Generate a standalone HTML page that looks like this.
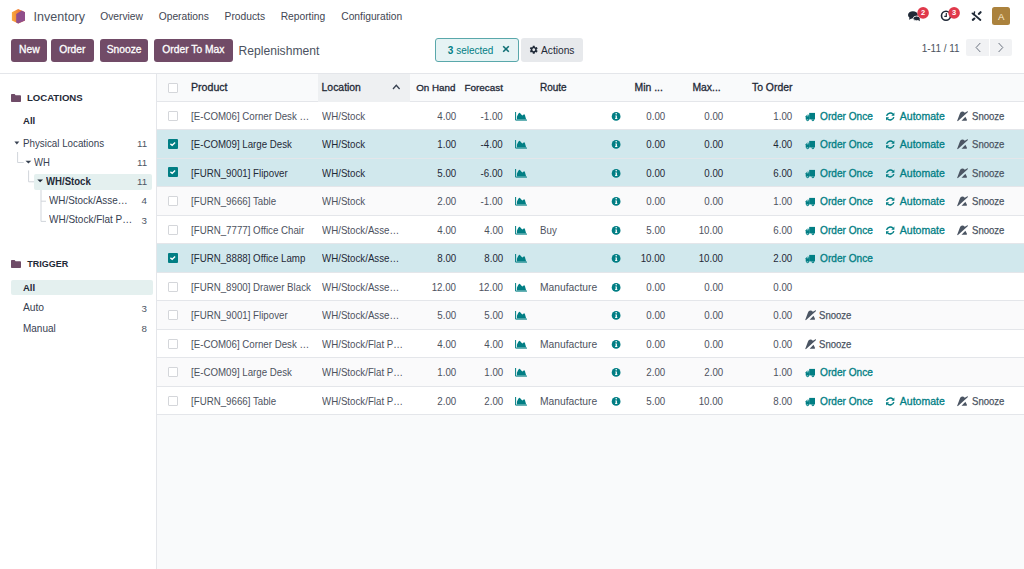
<!DOCTYPE html>
<html><head><meta charset="utf-8">
<style>
*{box-sizing:border-box;margin:0;padding:0}
html,body{width:1024px;height:569px;overflow:hidden;background:#fff;font-family:"Liberation Sans",sans-serif;color:#374151}
.a{position:absolute;white-space:nowrap}
.nav{font-size:10.25px;color:#3f4652}
.btn{position:absolute;top:38.5px;height:23.5px;background:#714b67;border-radius:3px;color:#fff;-webkit-text-stroke:0.3px #fff;font-size:10.3px;line-height:22.5px;text-align:center}
#side{position:absolute;left:0;top:74px;width:157px;height:495px;background:#fff;border-right:1px solid #e4e6ea}
#list{position:absolute;left:157px;top:74px;width:867px;height:495px;background:#f9fafb}
.row{position:absolute;left:0;width:867px;height:28.5px;border-bottom:1px solid #e4e6ea;background:#fff}
.row.sel{background:#d1e8ed}
.row.odd{background:#fafafb}
.cb{position:absolute;left:11px;top:9px;width:10px;height:10px;border:1px solid #d4d6da;background:#fff;border-radius:1px}
.cbk{position:absolute;left:11px;top:8.9px;width:10px;height:10px;background:#017e84;border-radius:1px}
.t{position:absolute;top:1.2px;line-height:28.5px;font-size:10.4px;transform:scaleX(0.935);transform-origin:0 50%;color:#4d525e;white-space:nowrap}
.sel .t{color:#1f2937}
.r{text-align:right;transform-origin:100% 50%}
.hd{position:absolute;top:0;line-height:27px;font-size:10.2px;-webkit-text-stroke:0.3px #1f2937;color:#1f2937;white-space:nowrap}
.link{color:#017e84 !important;-webkit-text-stroke:0.3px #017e84;transform:none !important}
.sn{color:#4b5563 !important;-webkit-text-stroke:0.25px #4b5563;transform:none !important}
.side-t{position:absolute;font-size:9.8px;color:#374151;white-space:nowrap}
.cnt{position:absolute;right:9.3px;font-size:9.75px;color:#4b5563;text-align:right}
</style></head><body>

<!-- NAVBAR -->
<svg class="a" style="left:11px;top:8px" width="16" height="17" viewBox="11 8 16 17">
  <defs><linearGradient id="og" x1="0" y1="0" x2="1" y2="0"><stop offset="0" stop-color="#f9aa3e"/><stop offset="1" stop-color="#e9592a"/></linearGradient></defs>
  <polygon points="18.2,8.9 25,12.2 25,20.5 18.2,23.6 11.9,20.5 11.9,12.2" fill="url(#og)"/>
  <polygon points="16.2,14 21.8,10.6 25,12.2 25,20.5 18.2,23.6 16.2,22.6" fill="#904e8b"/>
</svg>
<div class="a" style="left:33.6px;top:7.2px;font-size:12.5px;line-height:20px;color:#4b5260">Inventory</div>
<div class="a nav" style="left:100.2px;top:9.2px;line-height:16px">Overview</div>
<div class="a nav" style="left:158.75px;top:9.2px;line-height:16px">Operations</div>
<div class="a nav" style="left:224.6px;top:9.2px;line-height:16px">Products</div>
<div class="a nav" style="left:280.7px;top:9.2px;line-height:16px">Reporting</div>
<div class="a nav" style="left:341.25px;top:9.2px;line-height:16px">Configuration</div>

<!-- right icons -->
<svg class="a" style="left:900px;top:0px" width="124" height="32" viewBox="900 0 124 32">
  <ellipse cx="912.9" cy="14.9" rx="4.9" ry="3.7" fill="#1f2937"/>
  <path d="M909.6 16.5 L909.1 19.7 L912.2 18.2 Z" fill="#1f2937"/>
  <ellipse cx="916.6" cy="18.4" rx="3.5" ry="2.3" fill="#1f2937" stroke="#fff" stroke-width="0.8"/>
  <path d="M917.6 19.4 L920 21.2 L919.5 18.6 Z" fill="#1f2937"/>
  <circle cx="923.1" cy="12.9" r="5.8" fill="#e0394b"/>
  <circle cx="946" cy="15.7" r="4.5" fill="none" stroke="#1f2937" stroke-width="1.6"/>
  <path d="M946.3 12.9 V16.4 H944.3" fill="none" stroke="#1f2937" stroke-width="1.2"/>
  <circle cx="954.1" cy="12.9" r="5.8" fill="#e0394b"/>
  <path d="M974.2 14.6 L980.4 20" stroke="#1f2937" stroke-width="1.8" stroke-linecap="round"/>
  <path d="M972.3 13.3 L973.9 14.6 L974.5 12" stroke="#1f2937" stroke-width="1.5" fill="none" stroke-linecap="round"/>
  <path d="M980.6 12.2 L978.8 13.9" stroke="#1f2937" stroke-width="2.1" stroke-linecap="round"/>
  <path d="M974.4 18.5 L972.8 19.9" stroke="#1f2937" stroke-width="2.1" stroke-linecap="round"/>
</svg>
<div class="a" style="left:917.3px;top:7.1px;width:11.6px;height:11.6px;color:#fff;font-size:7.5px;font-weight:bold;text-align:center;line-height:11.6px">2</div>
<div class="a" style="left:948.3px;top:7.1px;width:11.6px;height:11.6px;color:#fff;font-size:7.5px;font-weight:bold;text-align:center;line-height:11.6px">3</div>
<div class="a" style="left:992px;top:7.2px;width:18.4px;height:18.3px;border-radius:2.5px;background:#ab823d;color:#fcefd2;font-size:9.6px;text-align:center;line-height:19.6px">A</div>

<!-- CONTROL PANEL -->
<div class="btn" style="left:11.3px;width:36px">New</div>
<div class="btn" style="left:50.8px;width:43px">Order</div>
<div class="btn" style="left:99.8px;width:48.6px">Snooze</div>
<div class="btn" style="left:154.2px;width:78.4px">Order To Max</div>
<div class="a" style="left:238.6px;top:40.9px;font-size:12.1px;line-height:20px;color:#4b5260">Replenishment</div>

<div class="a" style="left:435.2px;top:38.4px;width:83.5px;height:23.4px;border:1px solid #5aa8ab;border-radius:3px;background:#e6f3f4"></div>
<div class="a" style="left:447.8px;top:42px;font-size:10px;line-height:17px;color:#017e84"><b>3</b> selected</div>
<svg class="a" style="left:502px;top:45px" width="8" height="8" viewBox="0 0 8 8"><path d="M1.2 1.2 L6.8 6.8 M6.8 1.2 L1.2 6.8" stroke="#0e6f74" stroke-width="1.6"/></svg>
<div class="a" style="left:521.2px;top:38.4px;width:61.6px;height:23.4px;border-radius:3px;background:#e7e9ec"></div>
<svg class="a" style="left:528.5px;top:45.2px" width="9.5" height="9.5" viewBox="0 0 24 24"><path fill="#1f2937" d="M19.4 13c.04-.33.06-.66.06-1s-.02-.67-.06-1l2.1-1.65c.2-.15.25-.42.12-.64l-2-3.46c-.12-.22-.39-.3-.61-.22l-2.49 1c-.52-.4-1.08-.73-1.69-.98l-.38-2.65C14.46 2.18 14.25 2 14 2h-4c-.25 0-.46.18-.49.42l-.38 2.65c-.61.25-1.17.59-1.69.98l-2.49-1c-.23-.09-.49 0-.61.22l-2 3.46c-.13.22-.07.49.12.64L4.57 11c-.04.33-.07.67-.07 1s.03.67.07 1l-2.11 1.65c-.19.15-.24.42-.12.64l2 3.46c.12.22.39.3.61.22l2.49-1c.52.4 1.08.73 1.69.98l.38 2.65c.03.24.24.42.49.42h4c.25 0 .46-.18.49-.42l.38-2.65c.61-.25 1.17-.59 1.69-.98l2.49 1c.23.09.49 0 .61-.22l2-3.46c.12-.22.07-.49-.12-.64L19.4 13zM12 15.5c-1.93 0-3.5-1.57-3.5-3.5s1.57-3.5 3.5-3.5 3.5 1.57 3.5 3.5-1.57 3.5-3.5 3.5z"/></svg>
<div class="a" style="left:541px;top:42px;font-size:10.2px;line-height:17px;color:#1f2937">Actions</div>

<div class="a" style="left:921.7px;top:39.6px;font-size:10px;line-height:17px;color:#4b5260">1-11 / 11</div>
<div class="a" style="left:966.2px;top:38.5px;width:45.7px;height:17.8px;background:#f1f2f4;border-radius:2px"></div>
<div class="a" style="left:989px;top:38.5px;width:1px;height:17.8px;background:#fff"></div>
<svg class="a" style="left:966px;top:38px" width="46" height="19" viewBox="0 0 46 19">
  <path d="M14.3 5 L10.1 9.5 L14.3 14" fill="none" stroke="#6b7280" stroke-width="1"/>
  <path d="M32.6 5 L36.8 9.5 L32.6 14" fill="none" stroke="#6b7280" stroke-width="1"/>
</svg>

<div class="a" style="left:0;top:73px;width:1024px;height:1px;background:#e4e6ea"></div>

<!-- SIDEBAR -->
<div id="side"></div>
<svg class="a" style="left:11px;top:94px" width="10" height="8" viewBox="0 0 10 8"><path d="M0 0.8 Q0 0 0.8 0 H3.6 L4.6 1.2 H9.2 Q10 1.2 10 2 V7.2 Q10 8 9.2 8 H0.8 Q0 8 0 7.2 Z" fill="#6f4c68"/></svg>
<div class="a" style="left:26.9px;top:90px;font-size:9.6px;font-weight:bold;line-height:16px;color:#1f2937">LOCATIONS</div>
<div class="a" style="left:23.1px;top:113px;font-size:9.5px;font-weight:bold;line-height:16px;color:#1f2937">All</div>

<svg class="a" style="left:0;top:130px" width="156" height="100" viewBox="0 130 156 100">
  <path d="M14.4 141.4 H19.3 L16.85 144.4 Z" fill="#374151"/>
  <path d="M17.6 152 V162.5 H23.7" fill="none" stroke="#d1d5db" stroke-width="1"/>
  <path d="M25.5 160.8 H31.3 L28.4 163.6 Z" fill="#374151"/>
  <path d="M28.6 170.4 V181.8 H34.3" fill="none" stroke="#d1d5db" stroke-width="1"/>
  <path d="M41 190 V221.4 M41 201.2 H46 M41 221.4 H46" fill="none" stroke="#d1d5db" stroke-width="1"/>
</svg>
<div class="a" style="left:22.8px;top:137.6px;font-size:10.3px;transform:scaleX(0.95);transform-origin:0 50%;line-height:12px;color:#374151">Physical Locations</div>
<div class="a" style="left:34.3px;top:157.2px;font-size:10.1px;transform:scaleX(0.94);transform-origin:0 50%;line-height:12px;color:#374151">WH</div>
<div class="a" style="left:34.3px;top:173.6px;width:117.9px;height:16px;border-radius:2px;background:#e4f0ef"></div>
<svg class="a" style="left:36px;top:178px" width="8" height="6" viewBox="0 0 8 6"><path d="M1.3 1.4 H7 L4.15 4.2 Z" fill="#1f2937"/></svg>
<div class="a" style="left:46px;top:175.7px;font-size:10.1px;transform:scaleX(0.95);transform-origin:0 50%;font-weight:bold;line-height:12px;color:#1f2937">WH/Stock</div>
<div class="a" style="left:49.2px;top:194.6px;font-size:10.3px;transform:scaleX(0.96);transform-origin:0 50%;line-height:12px;color:#374151">WH/Stock/Asse…</div>
<div class="a" style="left:49.2px;top:214.1px;font-size:10.3px;transform:scaleX(0.97);transform-origin:0 50%;line-height:12px;color:#374151">WH/Stock/Flat P…</div>
<div class="a cnt" style="top:138px;line-height:12px;right:auto;left:137px">11</div>
<div class="a cnt" style="top:157.2px;line-height:12px;right:auto;left:137px">11</div>
<div class="a cnt" style="top:176px;line-height:12px;right:auto;left:137px">11</div>
<div class="a cnt" style="top:195px;line-height:12px;right:auto;left:141.5px">4</div>
<div class="a cnt" style="top:214.6px;line-height:12px;right:auto;left:141.5px">3</div>

<svg class="a" style="left:11px;top:259.8px" width="10" height="8" viewBox="0 0 10 8"><path d="M0 0.8 Q0 0 0.8 0 H3.6 L4.6 1.2 H9.2 Q10 1.2 10 2 V7.2 Q10 8 9.2 8 H0.8 Q0 8 0 7.2 Z" fill="#6f4c68"/></svg>
<div class="a" style="left:27.2px;top:256px;font-size:9px;font-weight:bold;line-height:16px;color:#1f2937">TRIGGER</div>
<div class="a" style="left:11.4px;top:280.4px;width:141.6px;height:14.6px;border-radius:2px;background:#e4f0ef"></div>
<div class="a" style="left:22.9px;top:282px;font-size:9.5px;font-weight:bold;line-height:12px;color:#1f2937">All</div>
<div class="a" style="left:22.9px;top:302px;font-size:10.3px;line-height:12px;color:#374151">Auto</div>
<div class="a" style="left:22.9px;top:322.6px;font-size:10.3px;transform:scaleX(0.97);transform-origin:0 50%;line-height:12px;color:#374151">Manual</div>
<div class="a cnt" style="top:302.5px;line-height:12px;right:auto;left:141.5px">3</div>
<div class="a cnt" style="top:323px;line-height:12px;right:auto;left:141.5px">8</div>

<!-- LIST -->
<div id="list">
  <div class="a" style="left:0;top:0;width:867px;height:27.5px;background:#f9fafb;border-bottom:1px solid #e4e6ea"></div>
  <div class="a" style="left:161px;top:0;width:91.8px;height:27.5px;background:#eef0f2"></div>
  <div class="cb" style="top:9.3px"></div>
  <div class="hd" style="left:34px;font-size:10.6px">Product</div>
  <div class="hd" style="left:164.6px;font-size:10.4px">Location</div>
  <svg class="a" style="left:235px;top:10px" width="9" height="6" viewBox="0 0 9 6"><path d="M1 5 L4.3 1.2 L7.6 5" fill="none" stroke="#374151" stroke-width="1.3"/></svg>
  <div class="hd" style="left:259.2px;font-size:9.8px">On Hand</div>
  <div class="hd" style="left:307.5px;font-size:9.9px">Forecast</div>
  <div class="hd" style="left:383px;font-size:10.0px">Route</div>
  <div class="hd" style="left:477.5px;font-size:10.4px">Min ...</div>
  <div class="hd" style="left:535.4px;font-size:10.4px">Max...</div>
  <div class="hd" style="left:595px;font-size:10.4px">To Order</div>
<div class="row" style="top:27.50px"><div class="cb"></div><div class="t" style="left:34px">[E-COM06] Corner Desk …</div><div class="t" style="left:164.7px">WH/Stock</div><div class="t r" style="right:567.8px">4.00</div><div class="t r" style="right:520.9px">-1.00</div><div class="t r" style="right:358.8px">0.00</div><div class="t r" style="right:300.7px">0.00</div><div class="t r" style="right:231.8px">1.00</div><div class="t link" style="left:663.1px;font-size:10.1px">Order Once</div><div class="t link" style="left:742.8px;font-size:10.5px;top:0.3px">Automate</div><div class="t sn" style="left:815px;font-size:10.4px;transform:scaleX(0.92) !important">Snooze</div><svg style="position:absolute;left:0;top:0" width="867" height="29" viewBox="0 0 867 29"><path d="M358.6 10 V18.1 H370" fill="none" stroke="#017e84" stroke-width="1"/><path d="M359.9 17.6 V14.7 C360.6 13.1 361.5 10.9 362.4 10.8 C363.2 10.8 364.4 13.1 365.3 13.4 C366 13.4 366.7 12.1 367.3 12.2 C368 12.4 368.7 16 369.3 17.6 Z" fill="#017e84"/><circle cx="459.1" cy="14.4" r="4.4" fill="#017e84"/><circle cx="459.2" cy="11.8" r="0.8" fill="#fff"/><path d="M458.3 13.5 H459.9 V16.2 H460.4 V16.9 H458 V16.2 H458.6 V14.1 H458.3 Z" fill="#fff"/><g transform="translate(648.5,0)"><path d="M3.7 10.9 H9.5 V17.4 H3.7 Z" fill="#017e84"/><path d="M0.2 14.3 L1.6 12.7 H3.9 V17.4 H0.2 Z" fill="#017e84"/><path d="M1 14.2 L1.9 13.3 H3 V14.2 Z" fill="#bfe6e9"/><circle cx="2.1" cy="17.8" r="1.35" fill="#017e84"/><circle cx="7.4" cy="17.8" r="1.35" fill="#017e84"/><circle cx="2.1" cy="17.8" r="0.55" fill="#bfe6e9"/><circle cx="7.4" cy="17.8" r="0.55" fill="#bfe6e9"/></g><path d="M729.6 13.9 A3.8 3.8 0 0 1 736 12.2" fill="none" stroke="#017e84" stroke-width="1.5"/><path d="M736.8 15.1 A3.8 3.8 0 0 1 730.4 16.8" fill="none" stroke="#017e84" stroke-width="1.5"/><path d="M734.3 13.7 H737.4 V10.6 Z" fill="#017e84"/><path d="M732.1 15.3 H729 V18.4 Z" fill="#017e84"/><g transform="translate(799.9,9.2)"><path d="M0.3 9.5 L2.9 2.6 C3.5 1.1 4.4 0.4 5.4 0.4 C6.3 0.4 7.2 0.8 7.9 1.5 L10.1 0.2 C10.8 -0.1 11.3 0.6 10.8 1.1 L1.1 9.8 C0.7 10.1 0.2 9.9 0.3 9.5 Z" fill="#4b5563"/><path d="M4.6 9.6 L8.5 5.5 L9.9 8.4 L9.9 9.6 Z" fill="#4b5563"/></g></svg></div>
<div class="row sel" style="top:56.00px"><div class="cbk"><svg width="10" height="10" viewBox="0 0 10 10" style="position:absolute;left:0;top:0"><path d="M2.4 4.9 L4.2 6.3 L7.1 3.5" fill="none" stroke="#fff" stroke-width="1.35"/></svg></div><div class="t" style="left:34px">[E-COM09] Large Desk</div><div class="t" style="left:164.7px">WH/Stock</div><div class="t r" style="right:567.8px">1.00</div><div class="t r" style="right:520.9px">-4.00</div><div class="t r" style="right:358.8px">0.00</div><div class="t r" style="right:300.7px">0.00</div><div class="t r" style="right:231.8px">4.00</div><div class="t link" style="left:663.1px;font-size:10.1px">Order Once</div><div class="t link" style="left:742.8px;font-size:10.5px;top:0.3px">Automate</div><div class="t sn" style="left:815px;font-size:10.4px;transform:scaleX(0.92) !important">Snooze</div><svg style="position:absolute;left:0;top:0" width="867" height="29" viewBox="0 0 867 29"><path d="M358.6 10 V18.1 H370" fill="none" stroke="#017e84" stroke-width="1"/><path d="M359.9 17.6 V14.7 C360.6 13.1 361.5 10.9 362.4 10.8 C363.2 10.8 364.4 13.1 365.3 13.4 C366 13.4 366.7 12.1 367.3 12.2 C368 12.4 368.7 16 369.3 17.6 Z" fill="#017e84"/><circle cx="459.1" cy="14.4" r="4.4" fill="#017e84"/><circle cx="459.2" cy="11.8" r="0.8" fill="#fff"/><path d="M458.3 13.5 H459.9 V16.2 H460.4 V16.9 H458 V16.2 H458.6 V14.1 H458.3 Z" fill="#fff"/><g transform="translate(648.5,0)"><path d="M3.7 10.9 H9.5 V17.4 H3.7 Z" fill="#017e84"/><path d="M0.2 14.3 L1.6 12.7 H3.9 V17.4 H0.2 Z" fill="#017e84"/><path d="M1 14.2 L1.9 13.3 H3 V14.2 Z" fill="#bfe6e9"/><circle cx="2.1" cy="17.8" r="1.35" fill="#017e84"/><circle cx="7.4" cy="17.8" r="1.35" fill="#017e84"/><circle cx="2.1" cy="17.8" r="0.55" fill="#bfe6e9"/><circle cx="7.4" cy="17.8" r="0.55" fill="#bfe6e9"/></g><path d="M729.6 13.9 A3.8 3.8 0 0 1 736 12.2" fill="none" stroke="#017e84" stroke-width="1.5"/><path d="M736.8 15.1 A3.8 3.8 0 0 1 730.4 16.8" fill="none" stroke="#017e84" stroke-width="1.5"/><path d="M734.3 13.7 H737.4 V10.6 Z" fill="#017e84"/><path d="M732.1 15.3 H729 V18.4 Z" fill="#017e84"/><g transform="translate(799.9,9.2)"><path d="M0.3 9.5 L2.9 2.6 C3.5 1.1 4.4 0.4 5.4 0.4 C6.3 0.4 7.2 0.8 7.9 1.5 L10.1 0.2 C10.8 -0.1 11.3 0.6 10.8 1.1 L1.1 9.8 C0.7 10.1 0.2 9.9 0.3 9.5 Z" fill="#4b5563"/><path d="M4.6 9.6 L8.5 5.5 L9.9 8.4 L9.9 9.6 Z" fill="#4b5563"/></g></svg></div>
<div class="row sel" style="top:84.50px"><div class="cbk"><svg width="10" height="10" viewBox="0 0 10 10" style="position:absolute;left:0;top:0"><path d="M2.4 4.9 L4.2 6.3 L7.1 3.5" fill="none" stroke="#fff" stroke-width="1.35"/></svg></div><div class="t" style="left:34px">[FURN_9001] Flipover</div><div class="t" style="left:164.7px">WH/Stock</div><div class="t r" style="right:567.8px">5.00</div><div class="t r" style="right:520.9px">-6.00</div><div class="t r" style="right:358.8px">0.00</div><div class="t r" style="right:300.7px">0.00</div><div class="t r" style="right:231.8px">6.00</div><div class="t link" style="left:663.1px;font-size:10.1px">Order Once</div><div class="t link" style="left:742.8px;font-size:10.5px;top:0.3px">Automate</div><div class="t sn" style="left:815px;font-size:10.4px;transform:scaleX(0.92) !important">Snooze</div><svg style="position:absolute;left:0;top:0" width="867" height="29" viewBox="0 0 867 29"><path d="M358.6 10 V18.1 H370" fill="none" stroke="#017e84" stroke-width="1"/><path d="M359.9 17.6 V14.7 C360.6 13.1 361.5 10.9 362.4 10.8 C363.2 10.8 364.4 13.1 365.3 13.4 C366 13.4 366.7 12.1 367.3 12.2 C368 12.4 368.7 16 369.3 17.6 Z" fill="#017e84"/><circle cx="459.1" cy="14.4" r="4.4" fill="#017e84"/><circle cx="459.2" cy="11.8" r="0.8" fill="#fff"/><path d="M458.3 13.5 H459.9 V16.2 H460.4 V16.9 H458 V16.2 H458.6 V14.1 H458.3 Z" fill="#fff"/><g transform="translate(648.5,0)"><path d="M3.7 10.9 H9.5 V17.4 H3.7 Z" fill="#017e84"/><path d="M0.2 14.3 L1.6 12.7 H3.9 V17.4 H0.2 Z" fill="#017e84"/><path d="M1 14.2 L1.9 13.3 H3 V14.2 Z" fill="#bfe6e9"/><circle cx="2.1" cy="17.8" r="1.35" fill="#017e84"/><circle cx="7.4" cy="17.8" r="1.35" fill="#017e84"/><circle cx="2.1" cy="17.8" r="0.55" fill="#bfe6e9"/><circle cx="7.4" cy="17.8" r="0.55" fill="#bfe6e9"/></g><path d="M729.6 13.9 A3.8 3.8 0 0 1 736 12.2" fill="none" stroke="#017e84" stroke-width="1.5"/><path d="M736.8 15.1 A3.8 3.8 0 0 1 730.4 16.8" fill="none" stroke="#017e84" stroke-width="1.5"/><path d="M734.3 13.7 H737.4 V10.6 Z" fill="#017e84"/><path d="M732.1 15.3 H729 V18.4 Z" fill="#017e84"/><g transform="translate(799.9,9.2)"><path d="M0.3 9.5 L2.9 2.6 C3.5 1.1 4.4 0.4 5.4 0.4 C6.3 0.4 7.2 0.8 7.9 1.5 L10.1 0.2 C10.8 -0.1 11.3 0.6 10.8 1.1 L1.1 9.8 C0.7 10.1 0.2 9.9 0.3 9.5 Z" fill="#4b5563"/><path d="M4.6 9.6 L8.5 5.5 L9.9 8.4 L9.9 9.6 Z" fill="#4b5563"/></g></svg></div>
<div class="row odd" style="top:113.00px"><div class="cb"></div><div class="t" style="left:34px">[FURN_9666] Table</div><div class="t" style="left:164.7px">WH/Stock</div><div class="t r" style="right:567.8px">2.00</div><div class="t r" style="right:520.9px">-1.00</div><div class="t r" style="right:358.8px">0.00</div><div class="t r" style="right:300.7px">0.00</div><div class="t r" style="right:231.8px">1.00</div><div class="t link" style="left:663.1px;font-size:10.1px">Order Once</div><div class="t link" style="left:742.8px;font-size:10.5px;top:0.3px">Automate</div><div class="t sn" style="left:815px;font-size:10.4px;transform:scaleX(0.92) !important">Snooze</div><svg style="position:absolute;left:0;top:0" width="867" height="29" viewBox="0 0 867 29"><path d="M358.6 10 V18.1 H370" fill="none" stroke="#017e84" stroke-width="1"/><path d="M359.9 17.6 V14.7 C360.6 13.1 361.5 10.9 362.4 10.8 C363.2 10.8 364.4 13.1 365.3 13.4 C366 13.4 366.7 12.1 367.3 12.2 C368 12.4 368.7 16 369.3 17.6 Z" fill="#017e84"/><circle cx="459.1" cy="14.4" r="4.4" fill="#017e84"/><circle cx="459.2" cy="11.8" r="0.8" fill="#fff"/><path d="M458.3 13.5 H459.9 V16.2 H460.4 V16.9 H458 V16.2 H458.6 V14.1 H458.3 Z" fill="#fff"/><g transform="translate(648.5,0)"><path d="M3.7 10.9 H9.5 V17.4 H3.7 Z" fill="#017e84"/><path d="M0.2 14.3 L1.6 12.7 H3.9 V17.4 H0.2 Z" fill="#017e84"/><path d="M1 14.2 L1.9 13.3 H3 V14.2 Z" fill="#bfe6e9"/><circle cx="2.1" cy="17.8" r="1.35" fill="#017e84"/><circle cx="7.4" cy="17.8" r="1.35" fill="#017e84"/><circle cx="2.1" cy="17.8" r="0.55" fill="#bfe6e9"/><circle cx="7.4" cy="17.8" r="0.55" fill="#bfe6e9"/></g><path d="M729.6 13.9 A3.8 3.8 0 0 1 736 12.2" fill="none" stroke="#017e84" stroke-width="1.5"/><path d="M736.8 15.1 A3.8 3.8 0 0 1 730.4 16.8" fill="none" stroke="#017e84" stroke-width="1.5"/><path d="M734.3 13.7 H737.4 V10.6 Z" fill="#017e84"/><path d="M732.1 15.3 H729 V18.4 Z" fill="#017e84"/><g transform="translate(799.9,9.2)"><path d="M0.3 9.5 L2.9 2.6 C3.5 1.1 4.4 0.4 5.4 0.4 C6.3 0.4 7.2 0.8 7.9 1.5 L10.1 0.2 C10.8 -0.1 11.3 0.6 10.8 1.1 L1.1 9.8 C0.7 10.1 0.2 9.9 0.3 9.5 Z" fill="#4b5563"/><path d="M4.6 9.6 L8.5 5.5 L9.9 8.4 L9.9 9.6 Z" fill="#4b5563"/></g></svg></div>
<div class="row" style="top:141.50px"><div class="cb"></div><div class="t" style="left:34px">[FURN_7777] Office Chair</div><div class="t" style="left:164.7px">WH/Stock/Asse…</div><div class="t r" style="right:567.8px">4.00</div><div class="t r" style="right:520.9px">4.00</div><div class="t" style="left:383px;">Buy</div><div class="t r" style="right:358.8px">5.00</div><div class="t r" style="right:300.7px">10.00</div><div class="t r" style="right:231.8px">6.00</div><div class="t link" style="left:663.1px;font-size:10.1px">Order Once</div><div class="t link" style="left:742.8px;font-size:10.5px;top:0.3px">Automate</div><div class="t sn" style="left:815px;font-size:10.4px;transform:scaleX(0.92) !important">Snooze</div><svg style="position:absolute;left:0;top:0" width="867" height="29" viewBox="0 0 867 29"><path d="M358.6 10 V18.1 H370" fill="none" stroke="#017e84" stroke-width="1"/><path d="M359.9 17.6 V14.7 C360.6 13.1 361.5 10.9 362.4 10.8 C363.2 10.8 364.4 13.1 365.3 13.4 C366 13.4 366.7 12.1 367.3 12.2 C368 12.4 368.7 16 369.3 17.6 Z" fill="#017e84"/><circle cx="459.1" cy="14.4" r="4.4" fill="#017e84"/><circle cx="459.2" cy="11.8" r="0.8" fill="#fff"/><path d="M458.3 13.5 H459.9 V16.2 H460.4 V16.9 H458 V16.2 H458.6 V14.1 H458.3 Z" fill="#fff"/><g transform="translate(648.5,0)"><path d="M3.7 10.9 H9.5 V17.4 H3.7 Z" fill="#017e84"/><path d="M0.2 14.3 L1.6 12.7 H3.9 V17.4 H0.2 Z" fill="#017e84"/><path d="M1 14.2 L1.9 13.3 H3 V14.2 Z" fill="#bfe6e9"/><circle cx="2.1" cy="17.8" r="1.35" fill="#017e84"/><circle cx="7.4" cy="17.8" r="1.35" fill="#017e84"/><circle cx="2.1" cy="17.8" r="0.55" fill="#bfe6e9"/><circle cx="7.4" cy="17.8" r="0.55" fill="#bfe6e9"/></g><path d="M729.6 13.9 A3.8 3.8 0 0 1 736 12.2" fill="none" stroke="#017e84" stroke-width="1.5"/><path d="M736.8 15.1 A3.8 3.8 0 0 1 730.4 16.8" fill="none" stroke="#017e84" stroke-width="1.5"/><path d="M734.3 13.7 H737.4 V10.6 Z" fill="#017e84"/><path d="M732.1 15.3 H729 V18.4 Z" fill="#017e84"/><g transform="translate(799.9,9.2)"><path d="M0.3 9.5 L2.9 2.6 C3.5 1.1 4.4 0.4 5.4 0.4 C6.3 0.4 7.2 0.8 7.9 1.5 L10.1 0.2 C10.8 -0.1 11.3 0.6 10.8 1.1 L1.1 9.8 C0.7 10.1 0.2 9.9 0.3 9.5 Z" fill="#4b5563"/><path d="M4.6 9.6 L8.5 5.5 L9.9 8.4 L9.9 9.6 Z" fill="#4b5563"/></g></svg></div>
<div class="row sel" style="top:170.00px"><div class="cbk"><svg width="10" height="10" viewBox="0 0 10 10" style="position:absolute;left:0;top:0"><path d="M2.4 4.9 L4.2 6.3 L7.1 3.5" fill="none" stroke="#fff" stroke-width="1.35"/></svg></div><div class="t" style="left:34px">[FURN_8888] Office Lamp</div><div class="t" style="left:164.7px">WH/Stock/Asse…</div><div class="t r" style="right:567.8px">8.00</div><div class="t r" style="right:520.9px">8.00</div><div class="t r" style="right:358.8px">10.00</div><div class="t r" style="right:300.7px">10.00</div><div class="t r" style="right:231.8px">2.00</div><div class="t link" style="left:663.1px;font-size:10.1px">Order Once</div><svg style="position:absolute;left:0;top:0" width="867" height="29" viewBox="0 0 867 29"><path d="M358.6 10 V18.1 H370" fill="none" stroke="#017e84" stroke-width="1"/><path d="M359.9 17.6 V14.7 C360.6 13.1 361.5 10.9 362.4 10.8 C363.2 10.8 364.4 13.1 365.3 13.4 C366 13.4 366.7 12.1 367.3 12.2 C368 12.4 368.7 16 369.3 17.6 Z" fill="#017e84"/><circle cx="459.1" cy="14.4" r="4.4" fill="#017e84"/><circle cx="459.2" cy="11.8" r="0.8" fill="#fff"/><path d="M458.3 13.5 H459.9 V16.2 H460.4 V16.9 H458 V16.2 H458.6 V14.1 H458.3 Z" fill="#fff"/><g transform="translate(648.5,0)"><path d="M3.7 10.9 H9.5 V17.4 H3.7 Z" fill="#017e84"/><path d="M0.2 14.3 L1.6 12.7 H3.9 V17.4 H0.2 Z" fill="#017e84"/><path d="M1 14.2 L1.9 13.3 H3 V14.2 Z" fill="#bfe6e9"/><circle cx="2.1" cy="17.8" r="1.35" fill="#017e84"/><circle cx="7.4" cy="17.8" r="1.35" fill="#017e84"/><circle cx="2.1" cy="17.8" r="0.55" fill="#bfe6e9"/><circle cx="7.4" cy="17.8" r="0.55" fill="#bfe6e9"/></g></svg></div>
<div class="row" style="top:198.50px"><div class="cb"></div><div class="t" style="left:34px">[FURN_8900] Drawer Black</div><div class="t" style="left:164.7px">WH/Stock/Asse…</div><div class="t r" style="right:567.8px">12.00</div><div class="t r" style="right:520.9px">12.00</div><div class="t" style="left:383px;font-size:11px;top:0.2px">Manufacture</div><div class="t r" style="right:358.8px">0.00</div><div class="t r" style="right:300.7px">0.00</div><div class="t r" style="right:231.8px">0.00</div><svg style="position:absolute;left:0;top:0" width="867" height="29" viewBox="0 0 867 29"><path d="M358.6 10 V18.1 H370" fill="none" stroke="#017e84" stroke-width="1"/><path d="M359.9 17.6 V14.7 C360.6 13.1 361.5 10.9 362.4 10.8 C363.2 10.8 364.4 13.1 365.3 13.4 C366 13.4 366.7 12.1 367.3 12.2 C368 12.4 368.7 16 369.3 17.6 Z" fill="#017e84"/><circle cx="459.1" cy="14.4" r="4.4" fill="#017e84"/><circle cx="459.2" cy="11.8" r="0.8" fill="#fff"/><path d="M458.3 13.5 H459.9 V16.2 H460.4 V16.9 H458 V16.2 H458.6 V14.1 H458.3 Z" fill="#fff"/></svg></div>
<div class="row odd" style="top:227.00px"><div class="cb"></div><div class="t" style="left:34px">[FURN_9001] Flipover</div><div class="t" style="left:164.7px">WH/Stock/Asse…</div><div class="t r" style="right:567.8px">5.00</div><div class="t r" style="right:520.9px">5.00</div><div class="t r" style="right:358.8px">0.00</div><div class="t r" style="right:300.7px">0.00</div><div class="t r" style="right:231.8px">0.00</div><div class="t sn" style="left:662.4px;font-size:10.4px;transform:scaleX(0.92) !important">Snooze</div><svg style="position:absolute;left:0;top:0" width="867" height="29" viewBox="0 0 867 29"><path d="M358.6 10 V18.1 H370" fill="none" stroke="#017e84" stroke-width="1"/><path d="M359.9 17.6 V14.7 C360.6 13.1 361.5 10.9 362.4 10.8 C363.2 10.8 364.4 13.1 365.3 13.4 C366 13.4 366.7 12.1 367.3 12.2 C368 12.4 368.7 16 369.3 17.6 Z" fill="#017e84"/><circle cx="459.1" cy="14.4" r="4.4" fill="#017e84"/><circle cx="459.2" cy="11.8" r="0.8" fill="#fff"/><path d="M458.3 13.5 H459.9 V16.2 H460.4 V16.9 H458 V16.2 H458.6 V14.1 H458.3 Z" fill="#fff"/><g transform="translate(648,9.2)"><path d="M0.3 9.5 L2.9 2.6 C3.5 1.1 4.4 0.4 5.4 0.4 C6.3 0.4 7.2 0.8 7.9 1.5 L10.1 0.2 C10.8 -0.1 11.3 0.6 10.8 1.1 L1.1 9.8 C0.7 10.1 0.2 9.9 0.3 9.5 Z" fill="#4b5563"/><path d="M4.6 9.6 L8.5 5.5 L9.9 8.4 L9.9 9.6 Z" fill="#4b5563"/></g></svg></div>
<div class="row" style="top:255.50px"><div class="cb"></div><div class="t" style="left:34px">[E-COM06] Corner Desk …</div><div class="t" style="left:164.7px">WH/Stock/Flat P…</div><div class="t r" style="right:567.8px">4.00</div><div class="t r" style="right:520.9px">4.00</div><div class="t" style="left:383px;font-size:11px;top:0.2px">Manufacture</div><div class="t r" style="right:358.8px">0.00</div><div class="t r" style="right:300.7px">0.00</div><div class="t r" style="right:231.8px">0.00</div><div class="t sn" style="left:662.4px;font-size:10.4px;transform:scaleX(0.92) !important">Snooze</div><svg style="position:absolute;left:0;top:0" width="867" height="29" viewBox="0 0 867 29"><path d="M358.6 10 V18.1 H370" fill="none" stroke="#017e84" stroke-width="1"/><path d="M359.9 17.6 V14.7 C360.6 13.1 361.5 10.9 362.4 10.8 C363.2 10.8 364.4 13.1 365.3 13.4 C366 13.4 366.7 12.1 367.3 12.2 C368 12.4 368.7 16 369.3 17.6 Z" fill="#017e84"/><circle cx="459.1" cy="14.4" r="4.4" fill="#017e84"/><circle cx="459.2" cy="11.8" r="0.8" fill="#fff"/><path d="M458.3 13.5 H459.9 V16.2 H460.4 V16.9 H458 V16.2 H458.6 V14.1 H458.3 Z" fill="#fff"/><g transform="translate(648,9.2)"><path d="M0.3 9.5 L2.9 2.6 C3.5 1.1 4.4 0.4 5.4 0.4 C6.3 0.4 7.2 0.8 7.9 1.5 L10.1 0.2 C10.8 -0.1 11.3 0.6 10.8 1.1 L1.1 9.8 C0.7 10.1 0.2 9.9 0.3 9.5 Z" fill="#4b5563"/><path d="M4.6 9.6 L8.5 5.5 L9.9 8.4 L9.9 9.6 Z" fill="#4b5563"/></g></svg></div>
<div class="row odd" style="top:284.00px"><div class="cb"></div><div class="t" style="left:34px">[E-COM09] Large Desk</div><div class="t" style="left:164.7px">WH/Stock/Flat P…</div><div class="t r" style="right:567.8px">1.00</div><div class="t r" style="right:520.9px">1.00</div><div class="t r" style="right:358.8px">2.00</div><div class="t r" style="right:300.7px">2.00</div><div class="t r" style="right:231.8px">1.00</div><div class="t link" style="left:663.1px;font-size:10.1px">Order Once</div><svg style="position:absolute;left:0;top:0" width="867" height="29" viewBox="0 0 867 29"><path d="M358.6 10 V18.1 H370" fill="none" stroke="#017e84" stroke-width="1"/><path d="M359.9 17.6 V14.7 C360.6 13.1 361.5 10.9 362.4 10.8 C363.2 10.8 364.4 13.1 365.3 13.4 C366 13.4 366.7 12.1 367.3 12.2 C368 12.4 368.7 16 369.3 17.6 Z" fill="#017e84"/><circle cx="459.1" cy="14.4" r="4.4" fill="#017e84"/><circle cx="459.2" cy="11.8" r="0.8" fill="#fff"/><path d="M458.3 13.5 H459.9 V16.2 H460.4 V16.9 H458 V16.2 H458.6 V14.1 H458.3 Z" fill="#fff"/><g transform="translate(648.5,0)"><path d="M3.7 10.9 H9.5 V17.4 H3.7 Z" fill="#017e84"/><path d="M0.2 14.3 L1.6 12.7 H3.9 V17.4 H0.2 Z" fill="#017e84"/><path d="M1 14.2 L1.9 13.3 H3 V14.2 Z" fill="#bfe6e9"/><circle cx="2.1" cy="17.8" r="1.35" fill="#017e84"/><circle cx="7.4" cy="17.8" r="1.35" fill="#017e84"/><circle cx="2.1" cy="17.8" r="0.55" fill="#bfe6e9"/><circle cx="7.4" cy="17.8" r="0.55" fill="#bfe6e9"/></g></svg></div>
<div class="row" style="top:312.50px"><div class="cb"></div><div class="t" style="left:34px">[FURN_9666] Table</div><div class="t" style="left:164.7px">WH/Stock/Flat P…</div><div class="t r" style="right:567.8px">2.00</div><div class="t r" style="right:520.9px">2.00</div><div class="t" style="left:383px;font-size:11px;top:0.2px">Manufacture</div><div class="t r" style="right:358.8px">5.00</div><div class="t r" style="right:300.7px">10.00</div><div class="t r" style="right:231.8px">8.00</div><div class="t link" style="left:663.1px;font-size:10.1px">Order Once</div><div class="t link" style="left:742.8px;font-size:10.5px;top:0.3px">Automate</div><div class="t sn" style="left:815px;font-size:10.4px;transform:scaleX(0.92) !important">Snooze</div><svg style="position:absolute;left:0;top:0" width="867" height="29" viewBox="0 0 867 29"><path d="M358.6 10 V18.1 H370" fill="none" stroke="#017e84" stroke-width="1"/><path d="M359.9 17.6 V14.7 C360.6 13.1 361.5 10.9 362.4 10.8 C363.2 10.8 364.4 13.1 365.3 13.4 C366 13.4 366.7 12.1 367.3 12.2 C368 12.4 368.7 16 369.3 17.6 Z" fill="#017e84"/><circle cx="459.1" cy="14.4" r="4.4" fill="#017e84"/><circle cx="459.2" cy="11.8" r="0.8" fill="#fff"/><path d="M458.3 13.5 H459.9 V16.2 H460.4 V16.9 H458 V16.2 H458.6 V14.1 H458.3 Z" fill="#fff"/><g transform="translate(648.5,0)"><path d="M3.7 10.9 H9.5 V17.4 H3.7 Z" fill="#017e84"/><path d="M0.2 14.3 L1.6 12.7 H3.9 V17.4 H0.2 Z" fill="#017e84"/><path d="M1 14.2 L1.9 13.3 H3 V14.2 Z" fill="#bfe6e9"/><circle cx="2.1" cy="17.8" r="1.35" fill="#017e84"/><circle cx="7.4" cy="17.8" r="1.35" fill="#017e84"/><circle cx="2.1" cy="17.8" r="0.55" fill="#bfe6e9"/><circle cx="7.4" cy="17.8" r="0.55" fill="#bfe6e9"/></g><path d="M729.6 13.9 A3.8 3.8 0 0 1 736 12.2" fill="none" stroke="#017e84" stroke-width="1.5"/><path d="M736.8 15.1 A3.8 3.8 0 0 1 730.4 16.8" fill="none" stroke="#017e84" stroke-width="1.5"/><path d="M734.3 13.7 H737.4 V10.6 Z" fill="#017e84"/><path d="M732.1 15.3 H729 V18.4 Z" fill="#017e84"/><g transform="translate(799.9,9.2)"><path d="M0.3 9.5 L2.9 2.6 C3.5 1.1 4.4 0.4 5.4 0.4 C6.3 0.4 7.2 0.8 7.9 1.5 L10.1 0.2 C10.8 -0.1 11.3 0.6 10.8 1.1 L1.1 9.8 C0.7 10.1 0.2 9.9 0.3 9.5 Z" fill="#4b5563"/><path d="M4.6 9.6 L8.5 5.5 L9.9 8.4 L9.9 9.6 Z" fill="#4b5563"/></g></svg></div>
</div>
</body></html>
